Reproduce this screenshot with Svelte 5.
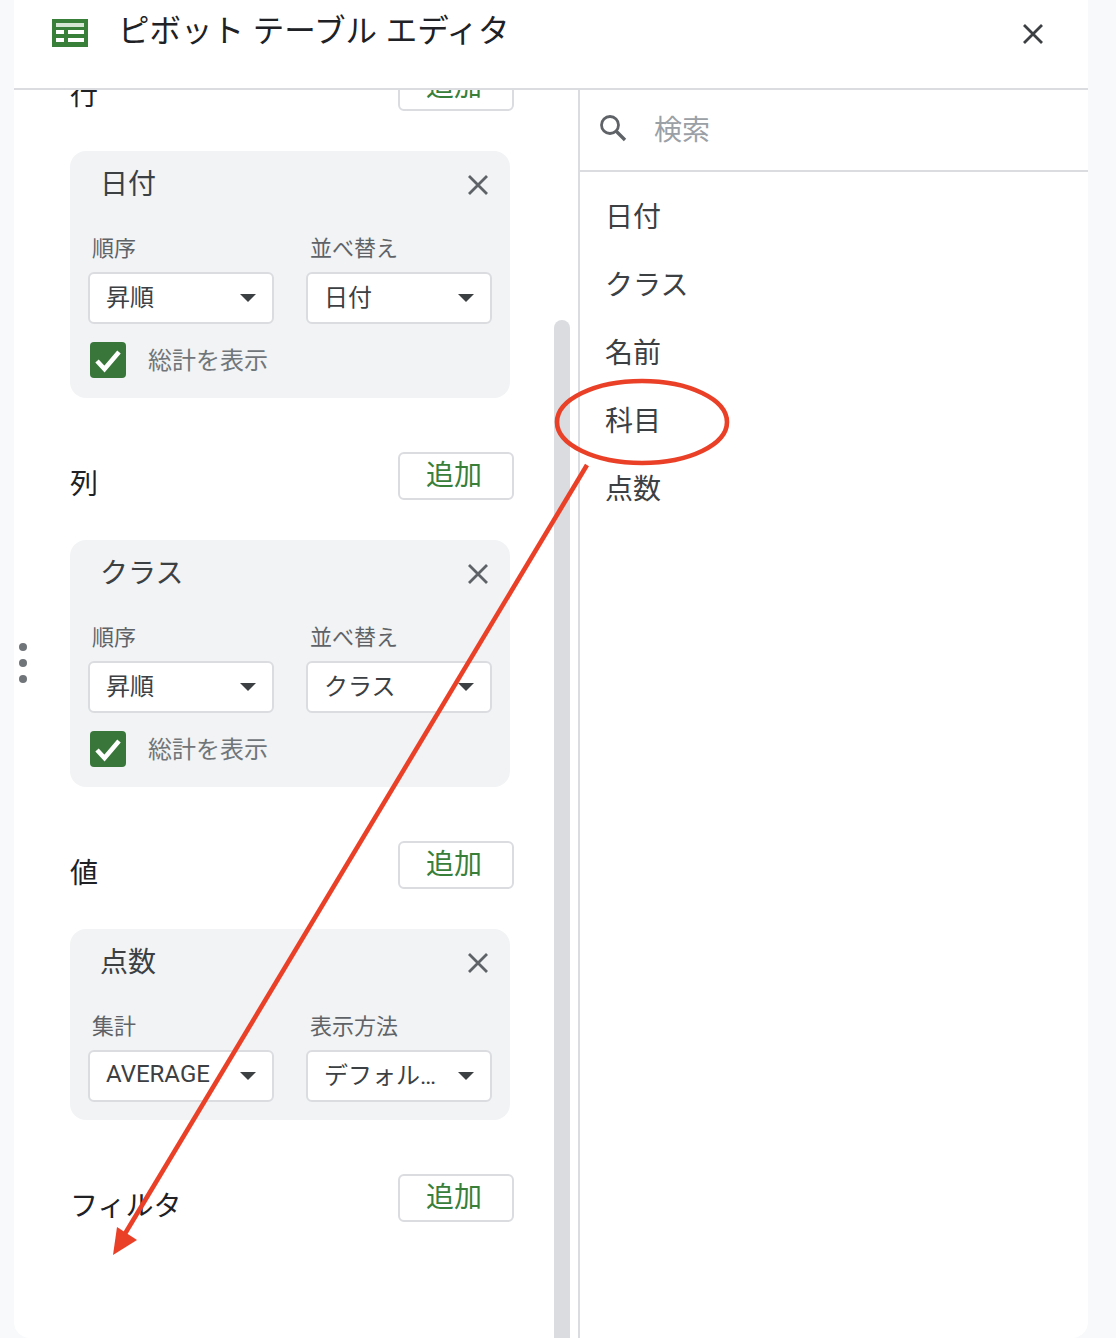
<script>
  const sections = [
    { title: "行", top: true, card: { name: "日付", l1: "順序", v1: "昇順", l2: "並べ替え", v2: "日付", total: true } },
    { title: "列", card: { name: "クラス", l1: "順序", v1: "昇順", l2: "並べ替え", v2: "クラス", total: true } },
    { title: "値", card: { name: "点数", l1: "集計", v1: "AVERAGE", l2: "表示方法", v2: "デフォル…", total: false } },
    { title: "フィルタ" }
  ];
  const fields = ["日付", "クラス", "名前", "科目", "点数"];
</script>

<div class="page">
  <div class="panel">
    <header class="header">
      <svg class="logo" width="36" height="28" viewBox="0 0 36 28">
        <rect width="36" height="28" fill="#38803a" />
        <rect x="4" y="4" width="28" height="4" fill="#d5e6d5" />
        <rect x="4" y="11" width="8" height="4" fill="#fff" />
        <rect x="16" y="11" width="16" height="4" fill="#fff" />
        <rect x="4" y="19" width="8" height="4" fill="#fff" />
        <rect x="16" y="19" width="16" height="4" fill="#fff" />
      </svg>
      <h1>ピボット テーブル エディタ</h1>
      <svg class="close" width="22" height="22" viewBox="0 0 22 22">
        <path d="M2 2 L20 20 M20 2 L2 20" stroke="#3c4043" stroke-width="2.8" fill="none" />
      </svg>
    </header>

    <div class="body">
      <div class="left">
        <div class="scroll">
          {#each sections as s}
            <section class="section">
              <div class="section-head">
                <span class="section-title">{s.title}</span>
                <button class="add">追加</button>
              </div>
              {#if s.card}
                <div class="card">
                  <div class="card-head">
                    <span>{s.card.name}</span>
                    <svg width="22" height="22" viewBox="0 0 22 22">
                      <path d="M2 2 L20 20 M20 2 L2 20" stroke="#5f6368" stroke-width="2.8" fill="none" />
                    </svg>
                  </div>
                  <div class="fields">
                    <label>{s.card.l1}</label>
                    <label>{s.card.l2}</label>
                    <div class="select"><span>{s.card.v1}</span><i class="caret"></i></div>
                    <div class="select"><span>{s.card.v2}</span><i class="caret"></i></div>
                  </div>
                  {#if s.card.total}
                    <div class="total">
                      <span class="check">
                        <svg width="36" height="36" viewBox="0 0 36 36">
                          <path d="M7 19 L14.5 27 L29 10" stroke="#fff" stroke-width="4.6" fill="none" />
                        </svg>
                      </span>
                      <span class="total-label">総計を表示</span>
                    </div>
                  {/if}
                </div>
              {/if}
            </section>
          {/each}
        </div>
        <div class="scrollbar"></div>
      </div>

      <div class="right">
        <div class="search">
          <svg width="28" height="28" viewBox="0 0 28 28">
            <circle cx="11" cy="11" r="8.5" stroke="#5f6368" stroke-width="2.8" fill="none" />
            <path d="M17 17 L26 26" stroke="#5f6368" stroke-width="3.4" fill="none" />
          </svg>
          <span>検索</span>
        </div>
        <ul class="list">
          {#each fields as f}
            <li>{f}</li>
          {/each}
        </ul>
      </div>
    </div>
  </div>

  <div class="dots"><i></i><i></i><i></i></div>

  <!-- annotation drawn over the screenshot -->
  <svg class="annotation" width="1116" height="1338" viewBox="0 0 1116 1338">
    <ellipse cx="642" cy="422" rx="85" ry="41" fill="none" stroke="#ea4027" stroke-width="4.6" />
    <path d="M587 465 L123 1237" stroke="#ea4027" stroke-width="4.6" fill="none" />
    <path d="M113 1255 L117 1227 L137 1240 Z" fill="#ea4027" />
  </svg>
</div>

<style>
  :global(body) {
    margin: 0;
    background: #f8f9fb;
  }

  * {
    box-sizing: border-box;
  }

  .page {
    position: relative;
    width: 1116px;
    height: 1338px;
    overflow: hidden;
    padding: 0 28px 0 14px;
    font-family: Roboto, "Noto Sans CJK JP", sans-serif;
    color: #3c4043;
  }

  .panel {
    display: flex;
    flex-direction: column;
    height: 100%;
    background: #fff;
    border-radius: 0 0 16px 16px;
  }

  .header {
    display: flex;
    align-items: center;
    height: 90px;
    flex: none;
    padding: 0 44px 24px 38px;
    border-bottom: 2px solid #dadce0;
  }

  .logo {
    flex: none;
    margin-top: 2px;
  }

  h1 {
    flex: 1;
    margin: 0 0 0 30px;
    font-size: 31.5px;
    font-weight: 400;
    line-height: 40px;
    word-spacing: 1px;
    color: #202124;
  }

  .close {
    margin-top: 4px;
  }

  .body {
    display: flex;
    flex: 1;
    min-height: 0;
  }

  .left {
    position: relative;
    width: 566px;
    flex: none;
    overflow: hidden;
    border-right: 2px solid #dadce0;
  }

  .scroll {
    margin-top: -27px;
    padding-left: 56px;
  }

  .section {
    width: 444px;
    margin-bottom: 54px;
  }

  .section-head {
    display: flex;
    justify-content: space-between;
    height: 48px;
  }

  .section-title {
    padding-top: 13px;
    font-size: 28px;
    line-height: 40px;
    color: #202124;
  }

  .add {
    width: 116px;
    height: 48px;
    padding: 0 4px 0 0;
    border: 2px solid #dadce0;
    border-radius: 6px;
    background: #fff;
    font-family: inherit;
    font-size: 28px;
    line-height: 40px;
    color: #38803a;
  }

  .card {
    width: 440px;
    margin-top: 40px;
    padding: 14px 0 18px;
    border-radius: 16px;
    background: #f1f3f4;
  }

  .card-head {
    display: flex;
    justify-content: space-between;
    align-items: center;
    height: 38px;
    padding: 0 21px 0 30px;
    font-size: 28px;
  }

  .card-head span {
    margin-top: -4px;
  }

  .card-head svg {
    margin-top: 2px;
  }

  .fields {
    display: grid;
    grid-template-columns: 186px 186px;
    column-gap: 32px;
    row-gap: 10px;
    margin: 31px 0 0 18px;
  }

  label {
    padding: 1px 0 0 4px;
    font-size: 22px;
    line-height: 27px;
    color: #5f6368;
  }

  .select {
    display: flex;
    justify-content: space-between;
    align-items: center;
    height: 52px;
    padding: 0 16px 0 16px;
    border: 2px solid #dadce0;
    border-radius: 6px;
    background: #fff;
    font-size: 24px;
  }

  .select span {
    margin-top: -5px;
  }

  .caret {
    width: 0;
    height: 0;
    border-left: 8px solid transparent;
    border-right: 8px solid transparent;
    border-top: 8px solid #3c4043;
  }

  .total {
    display: flex;
    align-items: center;
    gap: 22px;
    margin: 18px 0 2px 20px;
  }

  .check {
    display: block;
    width: 36px;
    height: 36px;
    border-radius: 4px;
    background: #38763a;
  }

  .check svg {
    display: block;
  }

  .total-label {
    margin-top: -4px;
    font-size: 24px;
    color: #70757a;
  }

  .scrollbar {
    position: absolute;
    left: 540px;
    top: 230px;
    bottom: 0;
    width: 16px;
    border-radius: 8px 8px 0 0;
    background: #dadce0;
  }

  .right {
    flex: 1;
  }

  .search {
    display: flex;
    align-items: center;
    gap: 27px;
    height: 82px;
    padding: 0 0 4px 19px;
    border-bottom: 2px solid #dadce0;
    font-size: 28px;
    color: #9aa0a6;
  }

  .list {
    margin: 12px 0 0;
    padding: 0 0 0 25px;
    list-style: none;
    font-size: 28px;
  }

  .list li {
    height: 68px;
    line-height: 68px;
  }

  .dots {
    position: absolute;
    left: 19px;
    top: 643px;
    display: flex;
    flex-direction: column;
    gap: 8px;
  }

  .dots i {
    display: block;
    width: 8px;
    height: 8px;
    border-radius: 50%;
    background: #70757a;
  }

  .annotation {
    position: absolute;
    left: 0;
    top: 0;
    pointer-events: none;
  }
</style>
